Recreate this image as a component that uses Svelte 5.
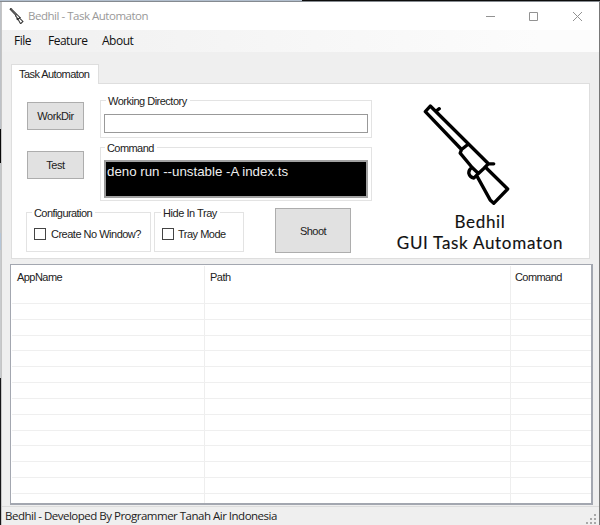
<script>
  const menus = ['File', 'Feature', 'About'];
  const rows = Array.from({ length: 13 }, (_, i) => i);
</script>

{#snippet rifle()}
  <path d="M107 95 L122 78 L297 252 L283 266 L267 281 L248 263 L212 220 L216 209 Z M216 209 L236 193 M140 93 L149 86 M297 252 H313 M248 263 Q237 270 238 281 Q241 293 253 295 L267 281 M289 263 L355 328 L313 371 L303 362 L263 290" />
{/snippet}

<div class="screen">
  <div class="topline"></div>
  <div class="middle">
    <div class="backdrop"></div>
    <main class="window">
      <header class="title">
        <svg class="appicon" viewBox="100 70 262 308">{@render rifle()}</svg>
        <span class="caption">Bedhil - Task Automaton</span>
        <svg class="controls" width="106" height="11" viewBox="0 0 106 11">
          <path d="M0 5.5H9M43.5 1.5h8v8h-8zM87 1l9 9M96 1l-9 9" />
        </svg>
      </header>
      <nav>
        {#each menus as menu}<span class={menu.toLowerCase()}>{menu}</span>{/each}
      </nav>
      <div class="tabs"><div class="tab"><span>Task Automaton</span></div></div>
      <section class="panel">
        <div class="form">
          <div class="upper">
            <div class="buttons">
              <button class="workdir">WorkDir</button>
              <button class="test">Test</button>
            </div>
            <div class="fields">
              <div class="group directory"><span class="legend">Working Directory</span><div class="input"></div></div>
              <div class="group command"><span class="legend">Command</span><div class="console">deno run --unstable -A index.ts</div></div>
            </div>
          </div>
          <div class="lower">
            <div class="group config"><span class="legend">Configuration</span><div class="option"><i></i><span>Create No Window?</span></div></div>
            <div class="group tray"><span class="legend">Hide In Tray</span><div class="option"><i></i><span>Tray Mode</span></div></div>
            <button class="shoot">Shoot</button>
          </div>
        </div>
        <div class="brand">
          <svg class="gun" viewBox="100 70 262 308">{@render rifle()}</svg>
          <div class="name">Bedhil</div>
          <div class="product">GUI Task Automaton</div>
        </div>
      </section>
      <section class="list">
        <div class="row head"><span class="app">AppName</span><span class="path">Path</span><span class="cmd">Command</span></div>
        <div class="row first"><span></span><span></span><span></span></div>
        {#each rows as row (row)}
          <div class="row"><span></span><span></span><span></span></div>
        {/each}
      </section>
      <footer>
        <span>Bedhil - Developed By Programmer Tanah Air Indonesia</span>
        <svg width="10" height="10" viewBox="0 0 10 10"><path d="M8 0h2v2H8zM4 4h2v2H4zM8 4h2v2H8zM0 8h2v2H0zM4 8h2v2H4zM8 8h2v2H8z" /></svg>
      </footer>
    </main>
  </div>
</div>

<style>
  :global(body) { margin: 0; overflow: hidden; }
  * { box-sizing: border-box; }
  .screen { width: 600px; height: 525px; display: flex; flex-direction: column; font: 11px "Liberation Sans", Arial, sans-serif; letter-spacing: -.57px; color: #222; }
  span { white-space: nowrap; }
  .topline { height: 2px; background: linear-gradient(90deg, #b2bfce 302px, #0c0c0c 302px); border-bottom: 1px solid #858a90; }
  .middle { display: flex; height: 523px; }
  .backdrop { width: 2px; background: linear-gradient(#bdc1c6 0 127px, #080808 127px 161px, #c3c6c8 161px 231px, #b5c5d7 231px 248px, #c9cbcd 248px 376px, #161618 376px); border-right: 1px solid #c5c5c5; }
  .window { width: 598px; background: #efefef; border-right: 1px solid #777; display: flex; flex-direction: column; }
  .title { height: 28px; background: #fff; display: flex; align-items: center; padding: 0 20px 0 7px; flex: none; }
  svg { fill: none; display: block; }
  .appicon { width: 15px; height: 16px; stroke: #333; stroke-width: 20; }
  .caption { margin: -2px 0 0 4px; font: 11.5px "Open Sans", sans-serif; letter-spacing: -.48px; color: #999; }
  .controls { margin-left: auto; stroke: #929292; stroke-width: 1; margin-right: -13px; }
  nav { height: 22px; background: linear-gradient(90deg, #f0f0f0, #fcfcfc 90%); display: flex; align-items: center; padding: 0 0 1px 12px; font: 12px "Open Sans", sans-serif; letter-spacing: -.5px; color: #111; flex: none; }
  .file { width: 34px; }
  .feature { width: 54px; }
  .tabs { height: 31px; padding: 12px 0 0 9px; flex: none; }
  .tab { width: 88px; height: 20px; background: #fff; border: 1px solid #dedede; border-bottom: 0; padding: 3px 0 0 7px; line-height: 12px; position: relative; z-index: 1; }
  .panel { width: 579px; height: 176px; margin-left: 9px; background: #fff; border: 1px solid #dedede; display: flex; flex: none; }
  .form { width: 361px; padding: 12px 0 0 15px; }
  .upper { display: flex; height: 108px; }
  .buttons { width: 73px; padding-top: 6px; display: flex; flex-direction: column; gap: 21px; }
  button { font: inherit; color: #222; background: #e1e1e1; border: 1px solid #adadad; padding: 0; }
  .workdir, .test { width: 57px; height: 28px; }
  .workdir { letter-spacing: -.4px; }
  .test { letter-spacing: -.4px; }
  .fields { padding-top: 4px; }
  .group { border: 1px solid #e3e3e3; display: flex; flex-direction: column; }
  .legend { align-self: flex-start; background: #fff; line-height: 12px; margin-top: -6px; margin-left: 5px; padding: 0 3px 0 2px; }
  .directory { width: 272px; height: 38px; }
  .directory .legend { letter-spacing: -.5px; }
  .command { width: 272px; height: 54px; margin-top: 9px; }
  .input { height: 19px; margin: 7px 3px 0; border: 1px solid #999; }
  .console { height: 38px; margin: 6px 3px 0; border: 2px solid #a2a2a2; border-left-color: #999; background: #000; color: #eee; font-size: 13.3px; line-height: 15px; padding: 2px 0 0 1px; letter-spacing: 0; }
  .command .legend { margin-left: 4px; }
  .lower { display: flex; align-items: flex-start; }
  .config { width: 125px; height: 40px; margin: 8px 3px 0 -1px; }
  .tray { width: 90px; height: 40px; margin: 8px 31px 0 0; }
  .tray .legend { margin-left: 6px; letter-spacing: -.45px; }
  .option { display: flex; align-items: center; margin: 9px 0 0 7px; height: 12px; letter-spacing: -.5px; }
  .option i { width: 12px; height: 12px; border: 1px solid #444; margin-right: 5px; }
  .tray .option { margin-left: 7px; }
  .tray .option i { margin-right: 4px; }
  .shoot { width: 76px; height: 45px; margin-top: 4px; letter-spacing: -.5px; }
  .brand { width: 214px; padding: 19px 0 0 0; font: 17px Lato, sans-serif; letter-spacing: .7px; -webkit-text-stroke: .15px #111; color: #111; display: flex; flex-direction: column; align-items: center; }
  .gun { width: 87px; height: 103px; margin-left: -27px; stroke: #000; stroke-width: 10; stroke-linecap: round; stroke-linejoin: round; }
  .name { line-height: 22px; margin-top: 5px; }
  .product { line-height: 20px; white-space: nowrap; }
  .list { width: 583px; height: 241px; margin: 5px 0 0 8px; border: 2px solid #a3a7b0; border-top-width: 1px; border-left-width: 1px; background: #fff; overflow: hidden; flex: none; padding-left: 1px; }
  .row { height: 15.83px; display: grid; grid-template-columns: 193px 306px 1fr; border-top: 1px solid #efefef; }
  .row span { border-right: 1px solid #eee; }
  .row span:last-child { border-right: 0; }
  .row.head { height: 23px; border: 0; padding-top: 1px; line-height: 22px; }
  .head .app { padding-left: 5px; letter-spacing: -.55px; }
  .head .path { padding-left: 5px; letter-spacing: -.5px; }
  .head .cmd { padding-left: 4px; }
  .row.first { border-top: 0; height: 15px; }
  footer { margin-top: 1px; border-top: 1px solid #dcdcdc; height: 20px; flex: none; display: flex; align-items: center; padding: 0 3px 0 3px; font: 11.5px "Open Sans", sans-serif; letter-spacing: -.5px; color: #222; }
  footer span { margin-top: -2px; }
  footer svg { margin: 5px 0 0 auto; fill: #a8a8a8; }
</style>
